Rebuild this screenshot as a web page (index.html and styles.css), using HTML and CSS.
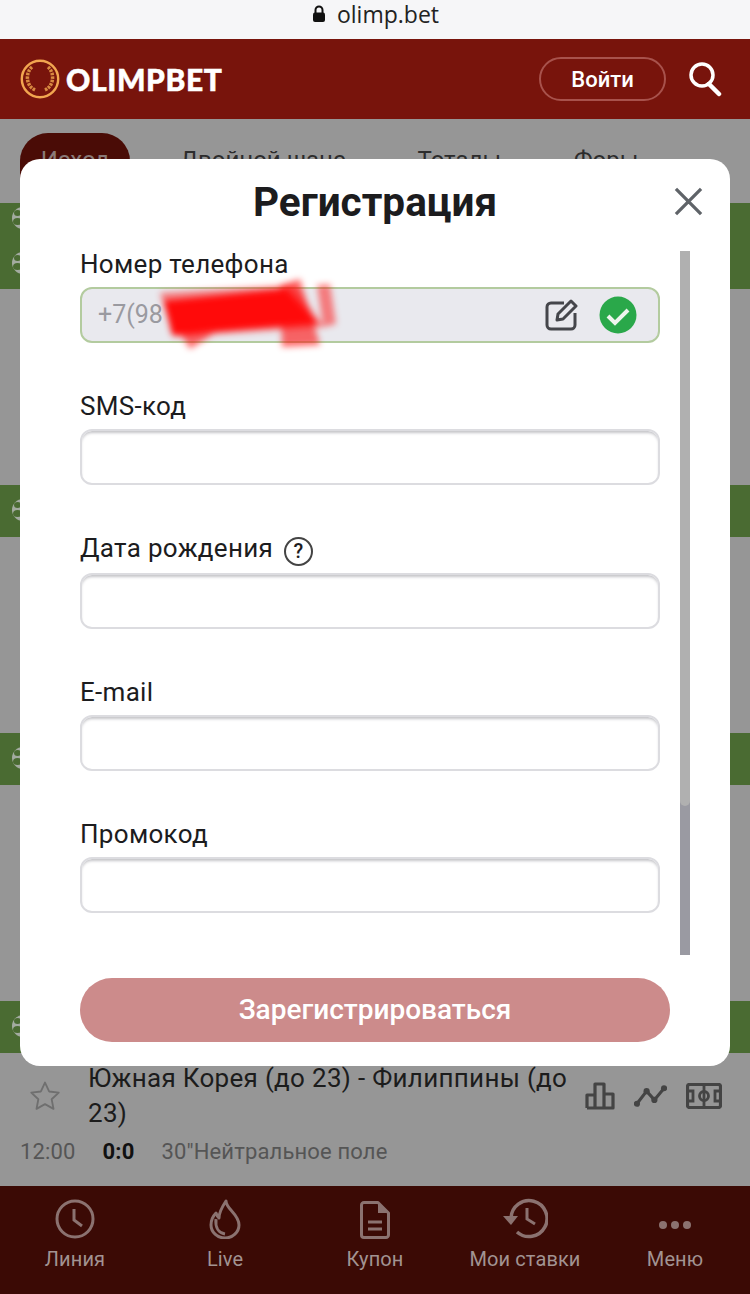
FILE: index.html
```html
<!DOCTYPE html>
<html lang="ru">
<head>
    <meta charset="UTF-8">
    <meta name="viewport" content="width=device-width, initial-scale=1.0">
    <title>OLIMPBET</title>
    <link rel="stylesheet" href="styles.css">
</head>
<body>
    <div class="urlbar">
        <svg class="lock" viewBox="0 0 14 18" width="14" height="18"><path d="M3.500 8V5a3.500 3.500 0 0 1 7 0v3" fill="none" stroke="#111" stroke-width="2"/><rect x="1" y="7.500" width="12" height="9.500" rx="2" fill="#111"/></svg>
        <span>olimp.bet</span>
    </div>
    <header class="top">
        <div class="logo">
            <svg viewBox="0 0 40 40" width="40" height="40">
                <circle cx="20" cy="20" r="18.200" fill="none" stroke="#f2a650" stroke-width="2.400"/>
                <path d="M15 31C6 27 5 14 12 8M25 31c9-4 10-17 3-23" fill="none" stroke="#d98a42" stroke-width="3.500" stroke-dasharray="2.500 1"/>
            </svg>
            <span>OLIMPBET</span>
        </div>
        <button class="login">Войти</button>
        <svg class="search" viewBox="0 0 36 36" width="36" height="36"><circle cx="15" cy="14" r="11" fill="none" stroke="#fff" stroke-width="3.500"/><path d="M22 23l10 10" stroke="#fff" stroke-width="4.500" stroke-linecap="round"/></svg>
    </header>

    <main class="feed">
        <div class="tabs">
            <div class="tab tab-active">Исход</div>
            <div class="tab tab-double">Двойной шанс</div>
            <div class="tab tab-totals">Тоталы</div>
            <div class="tab">Форы</div>
        </div>
        <div class="band band-tall"><i class="ball"></i><i class="ball"></i></div>
        <div class="band band-2"><i class="ball"></i></div>
        <div class="band band-3"><i class="ball"></i></div>
        <div class="band band-4"><i class="ball"></i></div>
        <div class="match">
            <svg class="star" viewBox="0 0 24 24" width="34" height="34"><path d="M12 2.500l2.900 6.300 6.800.8-5 4.700 1.300 6.800-6-3.400-6 3.400 1.300-6.800-5-4.700 6.800-.8z" fill="none" stroke="#6f6f6f" stroke-width="1.300" stroke-linejoin="round"/></svg>
            <div class="match-name">Южная Корея (до 23) - Филиппины (до 23)</div>
            <div class="match-icons">
                <svg viewBox="0 0 30 28" width="30" height="28"><path d="M2 26V13h8M10 26V2h9v24M19 12h9v14H2" fill="none" stroke="#444" stroke-width="3.200" stroke-linejoin="round"/></svg>
                <svg viewBox="0 0 34 24" width="33" height="24"><path d="M3 20L13 7l8 9L31 4" fill="none" stroke="#444" stroke-width="3.200"/><circle cx="3" cy="20" r="3.200" fill="#444"/><circle cx="13" cy="7" r="3.200" fill="#444"/><circle cx="21" cy="16" r="3.200" fill="#444"/><circle cx="31" cy="4" r="3.200" fill="#444"/></svg>
                <svg viewBox="0 0 36 26" width="36" height="26"><rect x="1.500" y="1.500" width="33" height="23" rx="2" fill="none" stroke="#444" stroke-width="3.200"/><path d="M18 2v22M2 8h5v10H2M34 8h-5v10h5" fill="none" stroke="#444" stroke-width="2.800"/><circle cx="18" cy="13" r="4.500" fill="none" stroke="#444" stroke-width="2.800"/></svg>
            </div>
        </div>
        <div class="match-info"><span>12:00</span><b>0:0</b><span>30"Нейтральное поле</span></div>
    </main>

    <nav class="bottom">
        <div class="nav-item">
            <svg viewBox="0 0 40 40" width="40" height="40"><circle cx="20" cy="20" r="18" fill="none" stroke="#8b7270" stroke-width="3"/><path d="M19 10v11l8 6" fill="none" stroke="#8b7270" stroke-width="3"/></svg>
            <span>Линия</span>
        </div>
        <div class="nav-item">
            <svg viewBox="0 0 34 40" width="34" height="40"><path d="M18 2c0 8 13 13 13 24a14 13 0 0 1-28 0c0-5 2-9 5-12 1 3 2 4 3 5 0-6 3-11 7-17z" fill="none" stroke="#8b7270" stroke-width="3" stroke-linejoin="round"/><path d="M8 20c-1 9 3 14 9 15" fill="none" stroke="#8b7270" stroke-width="3"/></svg>
            <span>Live</span>
        </div>
        <div class="nav-item">
            <svg viewBox="0 0 30 38" width="30" height="38"><path d="M4 1.500h14L28.500 12v22a2.500 2.500 0 0 1-2.500 2.500H4A2.500 2.500 0 0 1 1.500 34V4A2.500 2.500 0 0 1 4 1.500z" fill="none" stroke="#8b7270" stroke-width="3" stroke-linejoin="round"/><path d="M18 2v10h10z" fill="#8b7270"/><path d="M8 21h14M8 28h14" stroke="#8b7270" stroke-width="3"/></svg>
            <span>Купон</span>
        </div>
        <div class="nav-item">
            <svg viewBox="0 0 46 42" width="46" height="42"><path d="M9 21a18 18 0 1 1 6 14" fill="none" stroke="#8b7270" stroke-width="3.500"/><path d="M1 19h15l-7 9z" fill="#8b7270"/><path d="M25 11v11l8 5" fill="none" stroke="#8b7270" stroke-width="3"/></svg>
            <span>Мои ставки</span>
        </div>
        <div class="nav-item">
            <svg viewBox="0 0 34 40" width="34" height="40"><circle cx="5" cy="26" r="4" fill="#8b7270"/><circle cx="17" cy="26" r="4" fill="#8b7270"/><circle cx="29" cy="26" r="4" fill="#8b7270"/></svg>
            <span>Меню</span>
        </div>
    </nav>

    <div class="modal">
        <div class="modal-head">
            <h1>Регистрация</h1>
            <svg class="close" viewBox="0 0 30 30" width="29" height="29"><path d="M2 2l26 26M28 2L2 28" stroke="#5f6368" stroke-width="3.400"/></svg>
        </div>
        <div class="modal-body">
            <form class="form">
                <div class="field">
                    <label>Номер телефона</label>
                    <div class="input input-ok">
                        <span class="phone">+7(98</span>
                        <svg viewBox="0 0 34 34" width="34" height="34"><path d="M20 5H7a4 4 0 0 0-4 4v18a4 4 0 0 0 4 4h20a4 4 0 0 0 4-4V15" fill="none" stroke="#45464b" stroke-width="3"/><path d="M13 22l1-6L27 3l5 5-13 13z" fill="none" stroke="#45464b" stroke-width="3" stroke-linejoin="round"/></svg>
                        <svg viewBox="0 0 38 38" width="38" height="38"><circle cx="19" cy="19" r="18.500" fill="#2aa84a"/><path d="M9 20l7 7 13-13" fill="none" stroke="#eef5ee" stroke-width="4"/></svg>
                        <svg class="scribble" viewBox="0 0 190 80" width="190" height="80"><g fill="#ff0a0a"><path d="M6 16L140 8l30 42L20 60z" opacity=".5"/><path d="M126 8l20-6 20 66-38 2z" opacity=".6"/><path d="M163 8l13-1 6 40-13 3z" opacity=".5"/><path d="M26 56l35 0-25 16z" opacity=".6"/><path d="M10 24l122-12 32 34-146 12z"/></g></svg>
                    </div>
                </div>
                <div class="field">
                    <label>SMS-код</label>
                    <div class="input"></div>
                </div>
                <div class="field field-help">
                    <label>Дата рождения <i class="help">?</i></label>
                    <div class="input"></div>
                </div>
                <div class="field">
                    <label>E-mail</label>
                    <div class="input"></div>
                </div>
                <div class="field">
                    <label>Промокод</label>
                    <div class="input"></div>
                </div>
            </form>
            <div class="scrollbar"><div class="thumb"></div></div>
        </div>
        <button class="submit">Зарегистрироваться</button>
    </div>
</body>
</html>
```

FILE: styles.css
```css
* {
    box-sizing: border-box;
}
html, body {
    margin: 0;
    height: 1294px;
    overflow: hidden;
}
body {
    position: relative;
    display: flex;
    flex-direction: column;
    background-color: #969696;
    font-family: Roboto, "Liberation Sans", sans-serif;
    color: #1c1c1e;
}
.urlbar {
    height: 39px;
    display: flex;
    align-items: center;
    justify-content: center;
    gap: 11px;
    padding: 0 0 11px 1px;
    background-color: #f6f6f8;
    font-family: "Open Sans", sans-serif;
    font-size: 23px;
    color: #222;
}
.top {
    height: 80px;
    display: flex;
    align-items: center;
    padding: 0 27px 0 20px;
    background-color: #78140c;
}
.logo {
    display: flex;
    align-items: center;
    gap: 6px;
    flex: 1;
    font-family: Lato, sans-serif;
    font-weight: 900;
    font-size: 30px;
    letter-spacing: .6px;
    -webkit-text-stroke: .5px #fff;
    color: #fff;
}
.login {
    width: 127px;
    height: 44px;
    margin-right: 21px;
    border: 2px solid #a8524c;
    border-radius: 22px;
    background: none;
    color: #fff;
    font-family: Roboto, sans-serif;
    font-size: 22px;
    font-weight: 500;
}
.feed {
    flex: 1;
    display: flex;
    flex-direction: column;
}
.tabs {
    height: 84px;
    display: flex;
    padding-top: 14px;
    font-size: 24px;
    color: #2c2c2c;
}
.tab {
    line-height: 54px;
}
.tab-active {
    width: 110px;
    height: 70px;
    margin: 0 50px 0 20px;
    border-radius: 28px;
    background-color: #4a0c06;
    color: #8a7a78;
    text-align: center;
}
.tab-double {
    margin-right: 72px;
}
.tab-totals {
    margin-right: 73px;
}
.band {
    height: 52px;
    padding-top: 14px;
    background-color: #4a6b32;
    margin-top: 196px;
}
.band-tall {
    height: 86px;
    margin-top: 0;
    display: flex;
    flex-direction: column;
    gap: 23px;
    padding-top: 4px;
}
.band-3 {
    margin-top: 196px;
}
.band-4 {
    margin-top: 216px;
}
.ball {
    position: relative;
    display: block;
    width: 22px;
    height: 22px;
    margin-left: 12px;
    border-radius: 50%;
    background-color: #a3aba0;
}
.ball::before, .ball::after {
    content: "";
    position: absolute;
    border-radius: 50%;
    background-color: #4a6b32;
}
.ball::before {
    left: 2px;
    top: 3px;
    width: 7px;
    height: 6px;
}
.ball::after {
    left: 1px;
    top: 11px;
    width: 9px;
    height: 7px;
}
.match {
    display: flex;
    align-items: center;
    padding: 8px 0 0 28px;
}
.star {
    flex: none;
    margin-right: 26px;
}
.match-name {
    width: 485px;
    margin-right: 12px;
    font-size: 26px;
    letter-spacing: .3px;
    line-height: 35px;
    color: #1c1c1c;
}
.match-icons {
    display: flex;
    align-items: center;
    gap: 19px;
}
.match-info {
    display: flex;
    gap: 27px;
    padding: 8px 0 0 20px;
    font-size: 22px;
    letter-spacing: .15px;
    color: #555;
}
.match-info b {
    color: #111;
}
.bottom {
    height: 108px;
    display: flex;
    background-color: #3b0a05;
    font-size: 20px;
    letter-spacing: .1px;
    color: #a29392;
}
.nav-item {
    width: 150px;
    display: flex;
    flex-direction: column;
    align-items: center;
    justify-content: flex-end;
    gap: 8px;
    padding-bottom: 23px;
}
.modal {
    position: absolute;
    left: 20px;
    top: 159px;
    width: 710px;
    height: 907px;
    padding: 0 60px;
    border-radius: 20px;
    background-color: #fff;
}
.modal-head {
    position: relative;
    height: 92px;
    display: flex;
    align-items: center;
    justify-content: center;
    padding-bottom: 6px;
}
.modal-head h1 {
    margin: 0;
    font-size: 40.500px;
    font-weight: 700;
    color: #1c1c1e;
}
.close {
    position: absolute;
    right: -33px;
    top: 28px;
}
.modal-body {
    height: 704px;
    margin-right: -20px;
    display: flex;
    justify-content: space-between;
}
.form {
    width: 580px;
}
.field {
    margin-bottom: 50px;
}
.field label {
    display: flex;
    gap: 12px;
    height: 36px;
    font-size: 26px;
    letter-spacing: .3px;
    line-height: 26px;
    color: #1c1c1e;
}
.field-help label {
    height: 38px;
}
.help {
    display: block;
    width: 29px;
    height: 29px;
    margin: 2px 0 0 -1px;
    border: 2.500px solid #444;
    border-radius: 50%;
    font-style: normal;
    font-size: 20px;
    font-weight: 500;
    line-height: 24px;
    text-align: center;
}
.input {
    position: relative;
    height: 56px;
    display: flex;
    align-items: center;
    gap: 21px;
    padding-right: 21px;
    border: 2px solid #dcdce0;
    border-radius: 12px;
    background-color: #fff;
    box-shadow: inset 0 3px 3px -1px #c4c4c8;
}
.input-ok {
    justify-content: flex-end;
    border-color: #b3cb9f;
    background-color: #e9e9ee;
    box-shadow: none;
}
.phone {
    position: absolute;
    left: 16px;
    top: 11px;
    font-size: 25px;
    color: #9a9aa0;
}
.scribble {
    position: absolute;
    left: 72px;
    top: -12px;
    filter: blur(3px);
}
.scrollbar {
    width: 10px;
    height: 704px;
    background-color: #9a9aa2;
}
.thumb {
    height: 555px;
    border-radius: 0 0 5px 5px;
    background-color: #b0b0b0;
}
.submit {
    display: block;
    width: 590px;
    height: 64px;
    margin-top: 23px;
    padding-bottom: 3px;
    border: none;
    border-radius: 32px;
    background-color: #cc8b8b;
    color: #fff;
    font-family: Roboto, sans-serif;
    font-size: 28px;
    font-weight: 500;
}
```
